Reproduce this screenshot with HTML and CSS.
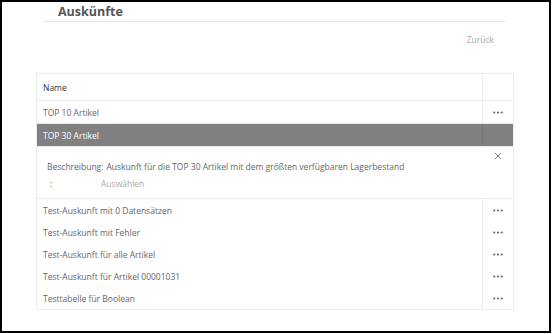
FILE: index.html
```html
<!DOCTYPE html>
<html lang="de">
  <head>
    <meta charset="UTF-8" />
    <title>Auskünfte</title>
    <link rel="stylesheet" href="styles.css">
  </head>
  <body>
    <div class="frame">
      <!-- Page header -->
      <div class="page-head">
        <h1 class="page-title">Auskünfte</h1>
      </div>

      <div class="toolbar">
        <a href="#" class="back-link">Zurück</a>
      </div>

      <!-- Report list -->
      <div class="list">
        <div class="row head-row">
          <div class="cell name">Name</div>
          <div class="cell action"></div>
        </div>
        <div class="row">
          <div class="cell name">TOP 10 Artikel</div>
          <div class="cell action">
            <svg class="dots" width="10" height="3" viewBox="0 0 10 3"><circle cx="1.3" cy="1.5" r="1.1"/><circle cx="5" cy="1.5" r="1.1"/><circle cx="8.7" cy="1.5" r="1.1"/></svg>
          </div>
        </div>
        <div class="row selected">
          <div class="cell name">TOP 30 Artikel</div>
          <div class="cell action"></div>
        </div>
        <div class="detail">
          <div class="detail-lines">
            <div class="detail-line">
              <span class="label">Beschreibung:</span>
              <span class="value">Auskunft für die TOP 30 Artikel mit dem größten verfügbaren Lagerbestand</span>
            </div>
            <div class="detail-line">
              <span class="label colon">:</span>
              <a href="#" class="pick">Auswählen</a>
            </div>
          </div>
          <button class="close">
            <svg width="8" height="8" viewBox="0 0 8 8"><path d="M1 1L7 7M7 1L1 7" stroke="#777" stroke-width="1"/></svg>
          </button>
        </div>
        <div class="row plain">
          <div class="cell name">Test-Auskunft mit 0 Datensätzen</div>
          <div class="cell action">
            <svg class="dots" width="10" height="3" viewBox="0 0 10 3"><circle cx="1.3" cy="1.5" r="1.1"/><circle cx="5" cy="1.5" r="1.1"/><circle cx="8.7" cy="1.5" r="1.1"/></svg>
          </div>
        </div>
        <div class="row plain">
          <div class="cell name">Test-Auskunft mit Fehler</div>
          <div class="cell action">
            <svg class="dots" width="10" height="3" viewBox="0 0 10 3"><circle cx="1.3" cy="1.5" r="1.1"/><circle cx="5" cy="1.5" r="1.1"/><circle cx="8.7" cy="1.5" r="1.1"/></svg>
          </div>
        </div>
        <div class="row plain">
          <div class="cell name">Test-Auskunft für alle Artikel</div>
          <div class="cell action">
            <svg class="dots" width="10" height="3" viewBox="0 0 10 3"><circle cx="1.3" cy="1.5" r="1.1"/><circle cx="5" cy="1.5" r="1.1"/><circle cx="8.7" cy="1.5" r="1.1"/></svg>
          </div>
        </div>
        <div class="row plain">
          <div class="cell name">Test-Auskunft für Artikel 00001031</div>
          <div class="cell action">
            <svg class="dots" width="10" height="3" viewBox="0 0 10 3"><circle cx="1.3" cy="1.5" r="1.1"/><circle cx="5" cy="1.5" r="1.1"/><circle cx="8.7" cy="1.5" r="1.1"/></svg>
          </div>
        </div>
        <div class="row plain">
          <div class="cell name">Testtabelle für Boolean</div>
          <div class="cell action">
            <svg class="dots" width="10" height="3" viewBox="0 0 10 3"><circle cx="1.3" cy="1.5" r="1.1"/><circle cx="5" cy="1.5" r="1.1"/><circle cx="8.7" cy="1.5" r="1.1"/></svg>
          </div>
        </div>
      </div>
    </div>
  </body>
</html>
```

FILE: styles.css
```css
body {
  margin: 0;
  font-family: "Open Sans", "Noto Sans", sans-serif;
  background: #fff;
}

/* Outer frame */
.frame {
  width: 551px;
  height: 333px;
  box-sizing: border-box;
  border: 2px solid #000;
  padding: 0 0 0 34px;
}

/* Header */
.page-head {
  margin-left: 7px;
  width: 462px;
  height: 19px;
  border-bottom: 1px solid #e6e6e6;
}

.page-title {
  margin: 0;
  padding-left: 15px;
  font-size: 12.5px;
  line-height: 19px;
  font-weight: 700;
  color: #555;
}

.toolbar {
  width: 476px;
  height: 51px;
  display: flex;
  justify-content: flex-end;
}

.back-link {
  margin: 12px 18px 0 0;
  font-size: 8.5px;
  color: #aaa;
  text-decoration: none;
}

/* List */
.list {
  width: 476px;
  border: 1px solid #ececec;
  font-size: 8.5px;
  color: #666;
}

.row {
  display: flex;
  height: 22px;
  border-bottom: 1px solid #ececec;
}

.row.plain {
  border-bottom: none;
}

.cell {
  display: flex;
  align-items: center;
}

.cell.name {
  flex: 1;
  padding-left: 6px;
}

.cell.action {
  width: 30px;
  justify-content: center;
  border-left: 1px solid #ececec;
}

.head-row {
  height: 26px;
  color: #333;
}

.selected {
  height: 22px;
  background-color: #808080;
  color: #fff;
}

.selected .cell.action {
  border-left-color: #777;
}

.dots {
  fill: #666;
}

/* Detail panel */
.detail {
  display: flex;
  height: 51px;
  border-bottom: 1px solid #ececec;
}

.detail-lines {
  flex: 1;
  padding: 11px 0 0 10px;
}

.detail-line {
  display: flex;
  height: 17px;
  align-items: center;
}

.label {
  white-space: nowrap;
}

.label.colon {
  width: 54px;
  padding-left: 3px;
  box-sizing: border-box;
}

.value {
  margin-left: 3px;
}

.pick {
  color: #aaa;
  text-decoration: none;
}

.close {
  align-self: flex-start;
  margin: 5px 11px 0 0;
  padding: 0;
  border: none;
  background: none;
  line-height: 0;
}
```
